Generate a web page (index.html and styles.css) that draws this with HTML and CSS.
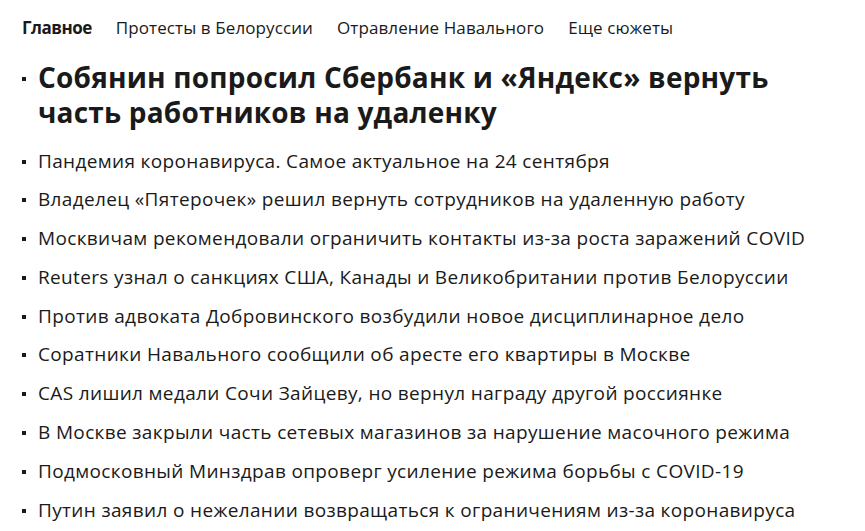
FILE: index.html
```html
<!DOCTYPE html>
<html lang="ru">
<head>
  <meta charset="UTF-8">
  <title>Главное</title>
  <link rel="stylesheet" href="styles.css">
</head>
<body>
  <nav class="topics">
    <a class="topic active">Главное</a>
    <a class="topic">Протесты в Белоруссии</a>
    <a class="topic">Отравление Навального</a>
    <a class="topic">Еще сюжеты</a>
  </nav>

  <ul class="news">
    <li class="lead">Собянин попросил Сбербанк и «Яндекс» вернуть часть работников на удаленку</li>
    <li>Пандемия коронавируса. Самое актуальное на 24 сентября</li>
    <li>Владелец «Пятерочек» решил вернуть сотрудников на удаленную работу</li>
    <li>Москвичам рекомендовали ограничить контакты из-за роста заражений COVID</li>
    <li>Reuters узнал о санкциях США, Канады и Великобритании против Белоруссии</li>
    <li>Против адвоката Добровинского возбудили новое дисциплинарное дело</li>
    <li>Соратники Навального сообщили об аресте его квартиры в Москве</li>
    <li>CAS лишил медали Сочи Зайцеву, но вернул награду другой россиянке</li>
    <li>В Москве закрыли часть сетевых магазинов за нарушение масочного режима</li>
    <li>Подмосковный Минздрав опроверг усиление режима борьбы с COVID-19</li>
    <li>Путин заявил о нежелании возвращаться к ограничениям из-за коронавируса</li>
  </ul>
</body>
</html>
```

FILE: styles.css
```css
body {
  margin: 0;
  padding: 16px 0 0 22px;
  background: #fff;
  color: #1a1a1a;
  font-family: "Open Sans", "Liberation Sans", sans-serif;
}

.topics {
  display: flex;
  gap: 24px;
  font-size: 17px;
  line-height: 24px;
}
.topic {
  color: #1a1a1a;
  letter-spacing: 0.1px;
  cursor: pointer;
}
.topic.active {
  font-weight: 700;
  letter-spacing: -0.5px;
}

.news {
  list-style: none;
  margin: 20px 0 0;
  padding: 0;
}
.news li {
  position: relative;
  padding-left: 16px;
  font-size: 19px;
  letter-spacing: 0.35px;
  line-height: 24px;
  margin-bottom: 14.8px;
}
.news li::before {
  content: "";
  position: absolute;
  left: 0;
  top: 11px;
  width: 4px;
  height: 4px;
  background: #1a1a1a;
}
.news li.lead {
  font-size: 28px;
  font-weight: 700;
  letter-spacing: 0.2px;
  line-height: 35px;
  margin-bottom: 18.5px;
  padding-right: 60px;
}
.news li.lead::before {
  top: 17px;
}
```
